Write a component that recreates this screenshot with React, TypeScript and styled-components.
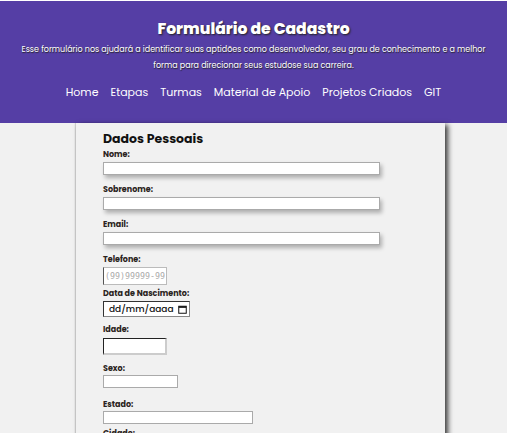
import React from "react";
import styled, { createGlobalStyle } from "styled-components";

const Global = createGlobalStyle`
  html, body { margin: 0; padding: 0; }
  body { font-family: "Poppins", "Open Sans", "Noto Sans", sans-serif; padding-top: 1px; background: #fff; }
  #root { background: #f1f1f1; min-height: 432px; }
`;

const Header = styled.header`
  background: #553ea5;
  color: #fff;
  text-align: center;
  padding: 17px 10px 20px;
  height: 122px;
  box-sizing: border-box;
`;

const Title = styled.h1`
  margin: 0;
  font-size: 15.6px;
  font-weight: 800;
  text-shadow: 1px 1px 2px #222;
  line-height: 22px;
`;

const Subtitle = styled.p`
  margin: 2px 0 0;
  font-size: 8px;
  line-height: 16px;
  text-shadow: 0.5px 0.5px 1px #222;
`;

const Nav = styled.nav`
  display: flex;
  justify-content: center;
  gap: 12px;
  margin-top: 10px;
`;

const NavLink = styled.a`
  color: #fff;
  font-size: 11px;
  text-decoration: none;
  line-height: 16px;
`;

const Card = styled.main`
  width: 369px;
  margin-left: 76px;
  box-sizing: border-box;
  background: #f1f1f1;
  padding: 7px 27px 0;
  box-shadow: 3px 2px 5px rgba(0, 0, 0, 0.75), -1px 0 1px rgba(0, 0, 0, 0.12);
  min-height: 312px;
`;

const SectionTitle = styled.h2`
  margin: 0 0 1px;
  font-size: 12.5px;
  font-weight: 700;
  color: #111;
  line-height: 18px;
`;

const Field = styled.div`
  display: flex;
  flex-direction: column;
  align-items: flex-start;
`;

const Label = styled.label<{ $mt?: number }>`
  font-size: 8px;
  font-weight: 700;
  color: #2a2320;
  line-height: 12px;
  margin-top: ${(p) => p.$mt ?? 0}px;
`;

const TextInput = styled.input<{ $w: number }>`
  box-sizing: border-box;
  width: ${(p) => p.$w}px;
  height: 13px;
  margin-top: 1px;
  border: 1px solid #aaa;
  background: #fff;
  box-shadow: 2px 3px 4px rgba(0, 0, 0, 0.28);
  padding: 0;
`;

const TelInput = styled.input`
  box-sizing: border-box;
  width: 64px;
  height: 18px;
  margin-top: 1px;
  border: 1px solid #bbb;
  border-left: 1px solid #555;
  background: #fff;
  font-family: "DejaVu Sans Mono", monospace;
  font-size: 8.3px;
  padding: 0 1px;
  &::placeholder { color: #aaa; }
`;

const DateBox = styled.div`
  box-sizing: border-box;
  width: 87px;
  height: 16px;
  margin-top: 1px;
  border: 1px solid #333;
  border-right-color: #888;
  border-bottom-color: #888;
  background: #fff;
  display: flex;
  align-items: center;
  justify-content: space-between;
  padding: 0 2px 0 5px;
  font-size: 9px;
  font-weight: 500;
  color: #111;
`;

const PlainInput = styled.input<{ $w: number; $h: number; $inset?: boolean }>`
  box-sizing: border-box;
  width: ${(p) => p.$w}px;
  height: ${(p) => p.$h}px;
  margin-top: ${(p) => (p.$inset ? 2 : 0)}px;
  background: #fff;
  padding: 0;
  border: ${(p) => (p.$inset ? "2px solid" : "1px solid #aaa")};
  ${(p) => (p.$inset ? "border-color: #222 #ccc #ccc #222; border-width: 1px 2px 2px 1px;" : "")}
`;

const CalendarIcon = () => (
  <svg width="9" height="9" viewBox="0 0 9 9">
    <rect x="0.75" y="1.25" width="7.5" height="7" fill="none" stroke="#111" strokeWidth="1" />
    <rect x="0.75" y="1.25" width="7.5" height="1.6" fill="#111" />
  </svg>
);

export default function App() {
  return (
    <>
      <Global />
      <Header>
        <Title>Formulário de Cadastro</Title>
        <Subtitle>
          Esse formulário nos ajudará a identificar suas aptidões como desenvolvedor, seu grau de conhecimento e a melhor
          <br />
          forma para direcionar seus estudose sua carreira.
        </Subtitle>
        <Nav>
          <NavLink href="#">Home</NavLink>
          <NavLink href="#">Etapas</NavLink>
          <NavLink href="#">Turmas</NavLink>
          <NavLink href="#">Material de Apoio</NavLink>
          <NavLink href="#">Projetos Criados</NavLink>
          <NavLink href="#">GIT</NavLink>
        </Nav>
      </Header>
      <Card>
        <SectionTitle>Dados Pessoais</SectionTitle>
        <Field>
          <Label>Nome:</Label>
          <TextInput $w={277} />
        </Field>
        <Field>
          <Label $mt={9}>Sobrenome:</Label>
          <TextInput $w={277} />
        </Field>
        <Field>
          <Label $mt={9}>Email:</Label>
          <TextInput $w={277} />
        </Field>
        <Field>
          <Label $mt={9}>Telefone:</Label>
          <TelInput placeholder="(99)99999-9999" />
        </Field>
        <Field>
          <Label $mt={3}>Data de Nascimento:</Label>
          <DateBox>
            <span>dd/mm/aaaa</span>
            <CalendarIcon />
          </DateBox>
        </Field>
        <Field>
          <Label $mt={7}>Idade:</Label>
          <PlainInput $w={64} $h={17} $inset />
        </Field>
        <Field>
          <Label $mt={8}>Sexo:</Label>
          <PlainInput $w={75} $h={13} />
        </Field>
        <Field>
          <Label $mt={11}>Estado:</Label>
          <PlainInput $w={150} $h={13} />
        </Field>
        <Field>
          <Label $mt={4}>Cidade:</Label>
        </Field>
      </Card>
    </>
  );
}
